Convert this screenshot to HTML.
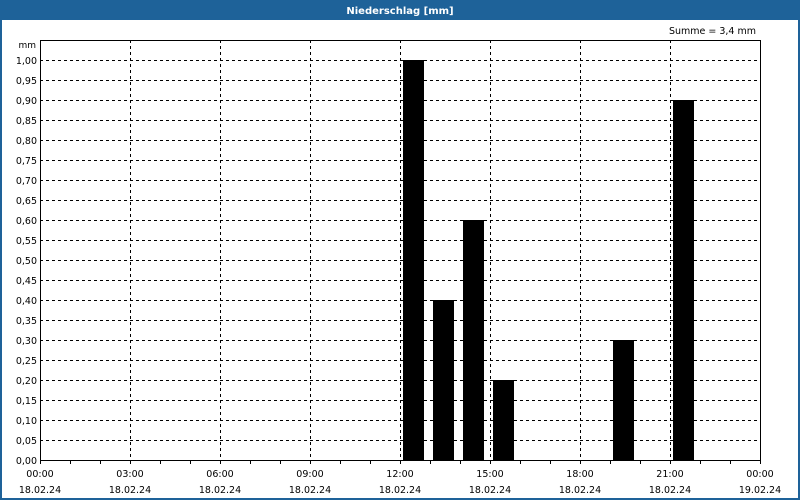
<!DOCTYPE html>
<html><head><style>
body{margin:0;width:800px;height:500px;overflow:hidden;background:#fff}
svg{display:block}
text{font-family:"DejaVu Sans","Liberation Sans",sans-serif;font-size:9.5px;fill:#000}
</style></head><body>
<svg width="800" height="500" xmlns="http://www.w3.org/2000/svg">
<rect x="0" y="0" width="800" height="500" fill="#1e6299"/>
<rect x="2" y="20" width="796" height="478" fill="#fff"/>
<text x="400" y="14" text-anchor="middle" style="fill:#fff;font-weight:bold;font-size:10px">Niederschlag [mm]</text>
<text x="756" y="34" text-anchor="end">Summe = 3,4 mm</text>
<text x="36" y="48" text-anchor="end" style="font-size:9px">mm</text>
<g stroke="#000" stroke-width="1" stroke-dasharray="3,3" shape-rendering="crispEdges">
<path d="M40 60.5H760M40 80.5H760M40 100.5H760M40 120.5H760M40 140.5H760M40 160.5H760M40 180.5H760M40 200.5H760M40 220.5H760M40 240.5H760M40 260.5H760M40 280.5H760M40 300.5H760M40 320.5H760M40 340.5H760M40 360.5H760M40 380.5H760M40 400.5H760M40 420.5H760M40 440.5H760"/>
<path d="M130.5 40V460M220.5 40V460M310.5 40V460M400.5 40V460M490.5 40V460M580.5 40V460M670.5 40V460"/>
</g>
<g fill="#000" shape-rendering="crispEdges">
<rect x="403" y="60" width="21" height="400"/>
<rect x="433" y="300" width="21" height="160"/>
<rect x="463" y="220" width="21" height="240"/>
<rect x="493" y="380" width="21" height="80"/>
<rect x="613" y="340" width="21" height="120"/>
<rect x="673" y="100" width="21" height="360"/>
</g>
<rect x="40.5" y="40.5" width="720" height="420" fill="none" stroke="#000" shape-rendering="crispEdges"/>
<g stroke="#000" shape-rendering="crispEdges">
<path d="M70.5 460v4M100.5 460v4M130.5 460v4M160.5 460v4M190.5 460v4M220.5 460v4M250.5 460v4M280.5 460v4M310.5 460v4M340.5 460v4M370.5 460v4M400.5 460v4M430.5 460v4M460.5 460v4M490.5 460v4M520.5 460v4M550.5 460v4M580.5 460v4M610.5 460v4M640.5 460v4M670.5 460v4M700.5 460v4M730.5 460v4M40.5 460v4M760.5 460v4"/>
</g>
<g text-anchor="end">
<text x="37" y="64">1,00</text><text x="37" y="84">0,95</text><text x="37" y="104">0,90</text><text x="37" y="124">0,85</text><text x="37" y="144">0,80</text><text x="37" y="164">0,75</text><text x="37" y="184">0,70</text><text x="37" y="204">0,65</text><text x="37" y="224">0,60</text><text x="37" y="244">0,55</text><text x="37" y="264">0,50</text><text x="37" y="284">0,45</text><text x="37" y="304">0,40</text><text x="37" y="324">0,35</text><text x="37" y="344">0,30</text><text x="37" y="364">0,25</text><text x="37" y="384">0,20</text><text x="37" y="404">0,15</text><text x="37" y="424">0,10</text><text x="37" y="444">0,05</text><text x="37" y="464">0,00</text>
</g>
<g text-anchor="middle">
<text x="40" y="477">00:00</text><text x="40" y="493">18.02.24</text>
<text x="130" y="477">03:00</text><text x="130" y="493">18.02.24</text>
<text x="220" y="477">06:00</text><text x="220" y="493">18.02.24</text>
<text x="310" y="477">09:00</text><text x="310" y="493">18.02.24</text>
<text x="400" y="477">12:00</text><text x="400" y="493">18.02.24</text>
<text x="490" y="477">15:00</text><text x="490" y="493">18.02.24</text>
<text x="580" y="477">18:00</text><text x="580" y="493">18.02.24</text>
<text x="670" y="477">21:00</text><text x="670" y="493">18.02.24</text>
<text x="760" y="477">00:00</text><text x="760" y="493">19.02.24</text>
</g>
</svg>
</body></html>
